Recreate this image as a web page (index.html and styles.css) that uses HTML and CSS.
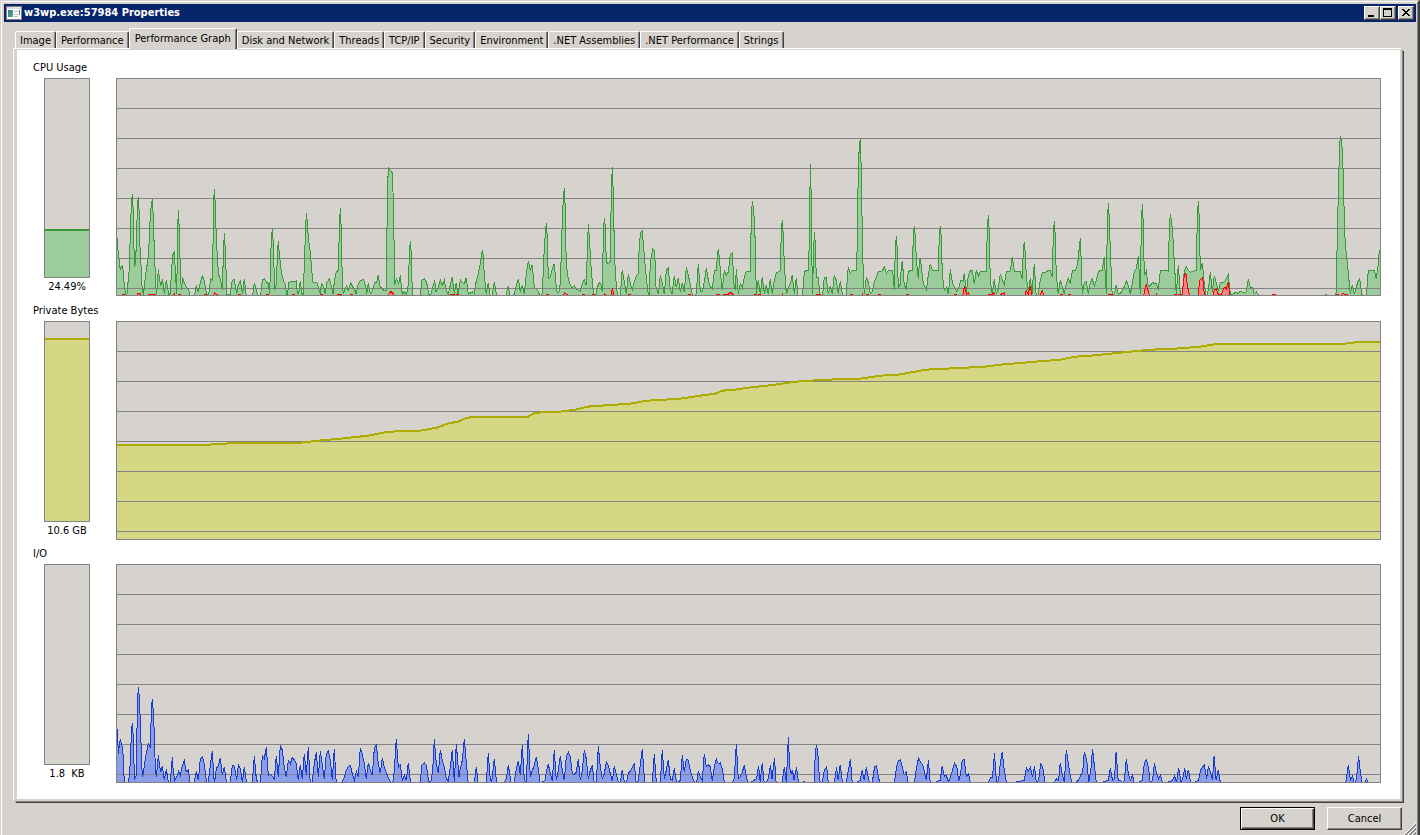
FILE: index.html
```html
<!DOCTYPE html>
<html lang="en">
<head>
<meta charset="utf-8">
<title>w3wp.exe:57984 Properties</title>
<link rel="stylesheet" href="styles.css">
</head>
<body>
<main class="window">
  <header class="titlebar">
    <svg class="app-icon" width="16" height="14" viewBox="0 0 16 14" shape-rendering="crispEdges" aria-hidden="true">
      <defs><linearGradient id="screen" x1="0" y1="0" x2="1" y2="1"><stop offset="0" stop-color="#3a72a8"/><stop offset="1" stop-color="#4fb37a"/></linearGradient></defs>
      <rect width="16" height="14" fill="#848284"/>
      <rect x="1" y="2" width="14" height="11" fill="#fff"/>
      <rect x="1" y="1" width="14" height="2" fill="#d6dbe0"/>
      <rect x="9" y="1" width="1" height="1" fill="#fff"/><rect x="11" y="1" width="1" height="1" fill="#fff"/><rect x="13" y="1" width="1" height="1" fill="#fff"/>
      <rect x="2" y="4" width="5" height="7" fill="url(#screen)"/>
      <path d="M8 5.5h4M8 8.5h4M8 10.5h4" stroke="#bdbebd"/>
      <rect x="13" y="4" width="1" height="5" fill="#4a7a78"/>
    </svg>
    <h1 class="title">w3wp.exe:57984 Properties</h1>
    <div class="controls">
      <button class="control" aria-label="Minimize"><svg width="12" height="10" viewBox="0 0 12 10" shape-rendering="crispEdges"><path d="M2 7h6v2H2z"/></svg></button>
      <button class="control" aria-label="Maximize"><svg width="12" height="10" viewBox="0 0 12 10" shape-rendering="crispEdges"><path fill-rule="evenodd" d="M1 0h9v9H1zM2 2v6h7V2z"/></svg></button>
      <button class="control close" aria-label="Close"><svg width="12" height="10" viewBox="0 0 12 10" shape-rendering="crispEdges"><path d="M2 1h2v1h1v1h2V2h1V1h2v1H9v1H8v1H7v1h1v1h1v1h1v1H8V7H7V6H5v1H4v1H2V7h1V6h1V5h1V4H4V3H3V2H2z"/></svg></button>
    </div>
  </header>

  <div class="tabs" role="tablist">
    <button class="tab" role="tab">Image</button>
    <button class="tab" role="tab">Performance</button>
    <button class="tab selected" role="tab" aria-selected="true">Performance Graph</button>
    <button class="tab" role="tab">Disk and Network</button>
    <button class="tab" role="tab">Threads</button>
    <button class="tab" role="tab">TCP/IP</button>
    <button class="tab" role="tab">Security</button>
    <button class="tab" role="tab">Environment</button>
    <button class="tab" role="tab">.NET Assemblies</button>
    <button class="tab" role="tab">.NET Performance</button>
    <button class="tab" role="tab">Strings</button>
  </div>

  <div class="page" role="tabpanel">
    <section class="metric cpu">
      <h2 class="label">CPU Usage</h2>
      <div class="meter"><div class="gauge"><div class="level" style="height:24.49%"></div></div><span class="value">24.49%</span></div>
      <svg class="plot" id="cpu" viewBox="0 0 1263 216" preserveAspectRatio="none"></svg>
    </section>
    <section class="metric memory">
      <h2 class="label">Private Bytes</h2>
      <div class="meter"><div class="gauge"><div class="level" style="height:92%"></div></div><span class="value">10.6 GB</span></div>
      <svg class="plot" id="memory" viewBox="0 0 1263 217" preserveAspectRatio="none"></svg>
    </section>
    <section class="metric io">
      <h2 class="label">I/O</h2>
      <div class="meter"><div class="gauge"></div><span class="value">1.8&nbsp; KB</span></div>
      <svg class="plot" id="io" viewBox="0 0 1263 217" preserveAspectRatio="none"></svg>
    </section>
  </div>

  <footer class="actions">
    <button class="push default">OK</button>
    <button class="push">Cancel</button>
  </footer>
  <svg class="grip" width="12" height="12" viewBox="0 0 12 12" aria-hidden="true"><path d="M0 12L12 0M4 12L12 4M8 12L12 8" stroke="#fff"/><path d="M1 12L12 1M2 12L12 2M5 12L12 5M6 12L12 6M9 12L12 9M10 12L12 10" stroke="#848284"/></svg>
</main>
<script src="charts.js"></script>
</body>
</html>
```
FILE: styles.css
```css
* { box-sizing: border-box; }
body {
  margin: 0;
  background: #d6d3ce;
  color: #000;
  font: 11px/14px "DejaVu Sans Condensed", "DejaVu Sans", sans-serif;
}
button { font: inherit; color: inherit; margin: 0; padding: 0; background: #d6d3ce; }
h1, h2 { margin: 0; font-size: 11px; font-weight: normal; }

.window {
  position: relative;
  display: flex;
  flex-direction: column;
  min-height: 100vh;
  padding: 3px 2px 0 3px;
  border: solid;
  border-width: 1px 2px 0 1px;
  border-color: #d6d3ce #424142 #d6d3ce #d6d3ce;
  box-shadow: inset 1px 1px #fff, inset -1px 0 #848284;
}
.titlebar {
  display: flex;
  align-items: center;
  height: 18px;
  padding: 0 2px;
  background: #08246b;
  color: #fff;
}
.app-icon { margin-right: 2px; }
.title { flex: 1; font-weight: bold; }
.controls { display: flex; }
.control {
  width: 16px;
  height: 14px;
  border: 1px solid;
  border-color: #fff #424142 #424142 #fff;
  box-shadow: inset -1px -1px #848284;
}
.control svg { display: block; margin: 1px; }
.close { margin-left: 2px; }

.tabs { display: flex; align-items: flex-end; height: 27px; padding: 0 0 1px 11px; }
.tab {
  height: 17px;
  padding: 1px 4px 0;
  border: 1px solid;
  border-width: 1px 1px 0 1px;
  border-color: #fff #424142 #fff #fff;
  border-radius: 2px 2px 0 0;
  box-shadow: inset -1px 0 #848284;
  white-space: nowrap;
}
.selected { position: relative; height: 21px; margin-bottom: -1px; padding: 0 5px 1px; }

.page {
  display: flex;
  flex: 1;
  flex-direction: column;
  margin: 0 14px 0 10px;
  padding: 4px 19px 16px 16px;
  background: #fff;
  border: 3px solid #d6d3ce;
  border-width: 1px 2px 2px 3px;
  box-shadow: 1px 1px #848284, 2px 2px #424142, -1px -1px #fff;
}
.metric {
  display: grid;
  flex: 1;
  grid-template: 24px 1fr / 68px 1fr;
  column-gap: 15px;
}
.cpu { padding-bottom: 1px; }
.label { grid-column: 1 / -1; padding-top: 7px; }
.meter { display: flex; flex-direction: column; align-items: center; }
.gauge {
  display: flex;
  flex: 1;
  flex-direction: column;
  justify-content: flex-end;
  width: 46px;
  background: #d6d3ce;
  border: 1px solid #848284;
}
.level { border-top: 2px solid; }
.value { height: 18px; line-height: 18px; }
.plot {
  width: 100%;
  height: 100%;
  min-height: 0;
  background: #d6d3ce;
  border: 1px solid #848284;
}
.cpu .level { background: #9ccb9c; border-color: #399a39; }
.memory .level { background: #d6d784; border-color: #adaa00; }

.line, .grid { fill: none; vector-effect: non-scaling-stroke; shape-rendering: crispEdges; }
.grid { stroke: #848284; }
.area { shape-rendering: crispEdges; }
.cpu .area { fill: #9ccb9c; }
.cpu .line { stroke: #399a39; }
.cpu .kernel-area { fill: #ff8684; }
.cpu .kernel-line { stroke: #f00; }
.memory .area { fill: #d6d784; }
.memory .line { stroke: #adaa00; stroke-width: 2px; }
.io .area { fill: #8c9ee7; }
.io .line { stroke: #183cce; }

.actions { display: flex; justify-content: flex-end; gap: 12px; padding: 6px 14px 5px 0; }
.push {
  width: 75px;
  height: 23px;
  border: 1px solid;
  border-color: #fff #424142 #424142 #fff;
  box-shadow: inset -1px -1px #848284;
}
.default {
  border-color: #000;
  box-shadow: inset 1px 1px #fff, inset -1px -1px #424142, inset -2px -2px #848284;
}
.grip { position: absolute; right: 2px; bottom: 0; }
```
FILE: charts.js
```javascript
// Each series is a list of blocks: x origin, x scale, then "x,y" samples.
// Samples are stored in thirds of a chart unit.
const CPU = [
  [-21, 1, `22,352 24,388 27,415 31,450 34,438 38,436 42,485 46,515 49,522 52,515 55,475 58,445 61,340 64,258 67,220 70,277 72,385 74,440 77,418 80,340 82,265 85,230 88,280 90,380 94,450 97,515 101,522 103,495 109,450 115,410 118,355 121,285 124,253 127,236 130,290 133,390 136,460 139,520 142,500 145,445 148,470 152,497 157,480 160,490 163,522 166,500 169,480 172,495 176,522 181,520 184,460 188,405 193,392 196,450 200,522 203,330 205,268 208,328 211,450 214,508 218,475 224,490 230,502 236,505 241,528 253,528 259,495 265,515 271,487 277,467 283,480 286,500 290,522 296,522 302,475 308,480 310,275 313,205 316,255 319,350 323,430 326,463 332,480 337,508 340,410 343,337 346,390 349,475 350,522 361,522 367,480 373,478 380,522 385,490 391,482 398,522 403,475 407,515 410,528 427,528 433,487 440,515 445,528 452,522 457,480 463,475 470,485 475,490 479,522 482,400 487,322 490,370 494,510 499,490 502,410 505,361 508,400 514,455 520,480 525,490 532,528 536,487 544,482 553,485 559,482 562,520 566,520 571,482 575,520 580,522 583,430 586,350 589,277 592,305 595,350 600,390 604,430 608,485 613,487 620,485 625,500 631,522 634,490 641,499 646,522 650,487 658,475 664,497 669,520 673,485 679,455 685,450 688,330 691,262 694,330 697,485 700,522 705,505 710,497 715,510 722,487 728,500 734,508 739,522 743,495 751,480 761,478 767,497 770,520 775,487 781,520 787,510 794,487 800,485 805,463 809,495 815,505 822,510 828,512 830,410 832,235 835,142 840,148 847,158 850,240 853,410 854,495 859,475 866,490 871,465 875,510 878,522 883,515 890,522 895,490 898,410 901,361 904,400 907,520 909,528 931,528 935,480 943,475 950,487 956,522 963,522 968,500 974,480 978,515 983,505 989,487`],
  [939, 1, `31,479 37,495 43,479 49,510 55,522 61,495 67,470 73,520 79,487 84,522 91,479 98,487 103,490 109,472 115,522 127,515 132,522 137,490 145,460 151,430 157,388 160,405 163,465 169,522 175,487 181,528 187,522 193,485 199,520 208,528 226,528 235,497 242,528 253,522 259,495 265,475 271,515 277,493 283,522 289,460 295,421 301,450 307,433 313,500 319,508 325,512 331,528 337,520 343,380 349,307 352,350 355,475 361,470 367,445 373,430 379,500 382,517 388,515 391,485 394,400 397,300 400,235 403,202 406,268 408,395 412,463 418,485 425,503 433,497 439,507 451,512 457,490 463,479 469,495 472,390 475,310 478,350 484,450 490,515 496,528 502,500 508,487 514,495 517,515 520,350 523,292 526,320 529,425 535,430 541,422 544,215 547,141 550,220 553,375 556,460 562,520 571,528 575,465 577,448 584,490 589,522 595,460 601,490 607,510 613,485 619,467 625,460 628,370 632,335 637,331 640,370 645,430 652,500 657,528 661,430 668,385 674,392 678,500 685,522 691,465 697,487 703,522 709,450 715,442 720,500 726,522 733,467 739,500 745,472 751,515 757,488 763,515 769,440 775,465 782,497 789,528 799,520 805,430 811,512 817,512 823,485 829,442 835,480 840,497 847,507 853,452 859,450 862,412 865,385 868,410 874,485 877,510 883,450 889,465 895,455 901,402 907,398 912,490 916,510 919,446 925,520 931,490 937,503 943,470 949,453 961,453 964,295 967,241 970,265 973,295 976,370 979,522`],
  [1899, 1, `25,479 31,520 37,470 43,520 49,493 55,520 61,476 67,522 73,480 79,457 91,452 94,333 97,298 100,345 103,435 109,520 117,497 121,490 127,464 133,520 139,473 145,528 157,528 163,455 169,450 175,450 178,370 181,130 184,235 187,522 190,430 193,334 196,370 199,470 205,472 211,528 218,522 223,470 229,472 235,522 241,497 247,520 253,463 259,480 265,520 271,482 277,522 289,528 292,470 295,440 301,458 307,450 319,450 322,375 325,133 328,82 331,56 334,153 337,345 340,463 343,522 349,473 355,485 361,520 367,515 373,485 379,470 385,453 397,452 403,440 409,458 415,450 427,450 430,470 433,510 436,385 439,347 442,390 445,505 451,490 454,440 457,421 463,495 469,505 475,453 487,450 490,350 493,317 496,345 499,415 505,475 508,430 511,412 514,440 520,490 529,508 535,465 541,430 547,450 559,452 565,450 568,345 571,317 574,350 577,460 583,510 590,500 595,522 598,490 601,446 607,485 613,500 620,513 626,503 632,480 640,482 643,457 649,520 655,465 661,452 667,450 673,490 679,450 685,468 691,452 709,452 712,325 715,283 718,335 721,485 727,522 733,476 739,522 745,505 751,460 757,480 763,493 769,455 781,452 787,409 793,453 811,453 817,475 820,390 823,364 826,400 829,470 835,515 841,473 847,520 850,460 853,431 859,528 865,522 871,480 877,458 889,455 895,450 901,450 907,470 910,345 913,301 916,350 919,465 925,522 931,479 937,500 943,520 949,490 955,473 961,490 967,452 977,450 983,430 989,370`],
  [2859, 1, `31,352 34,430 37,522 43,487 49,483 55,522 61,485 67,476 73,497 79,480 85,453 97,450 103,409 109,522 112,315 115,247 118,295 121,390 127,528 133,520 139,494 145,522 151,520 157,510 163,500 169,482 175,495 181,522 187,490 193,452 199,445 205,406 211,522 214,320 217,250 220,310 223,465 229,452 235,500 241,495 247,487 259,490 265,510 271,452 283,450 295,452 298,325 301,280 304,300 307,325 310,370 313,425 319,522 322,480 325,433 331,522 337,522 343,450 349,439 355,450 361,456 373,452 379,450 382,295 385,241 388,295 391,450 397,428 403,490 409,528 415,510 421,455 427,515 433,467 439,487 445,512 451,488 463,485 469,475 475,463 481,522 487,522 499,515 505,520 511,512 523,518 529,515 535,476 541,500 547,500 553,520 559,515 565,523 575,528 763,528 768,521 773,528 793,528 799,515 802,340 805,225 808,105 811,46 814,60 817,88 820,165 823,295 826,375 832,425 838,490 841,520 847,494 853,522 859,500 863,485 869,476 875,522 889,528 892,485 895,452 907,450 913,450 919,475 925,430 928,390 930,390`]
];
const KERNEL = [
  [-21, 1, `22,528 36,528 36,523 42,523 42,528 82,528 83,519 92,519 95,528 115,528 115,522 137,522 137,528 190,528 193,517 197,528 205,528 205,523 210,523 210,528 283,528 283,523 288,523 288,528 310,528 313,517 322,523 323,528 385,528 385,523 390,523 390,528 468,528 468,523 474,523 474,528 546,528 546,523 552,523 552,528 630,528 630,523 636,523 636,528 682,528 683,521 695,521 695,528 720,528 720,523 726,523 726,528 835,528 837,520 843,514 849,519 852,528`],
  [939, 1, `60,528 60,523 72,523 72,528 78,528 78,523 84,523 84,528 348,528 348,523 354,523 354,528 400,528 403,517 412,523 412,528 456,528 456,523 462,523 462,528 486,528 486,523 492,523 492,528 520,528 523,520 527,523 527,528 541,528 547,506 555,528 594,528 594,523 600,523 600,528 774,528 774,523 780,523 780,528 858,528 858,523 868,523 868,528 880,528 880,521 896,521 901,515 910,523 910,528 972,528 972,523 978,523 978,528`],
  [1899, 1, `24,528 24,523 30,523 30,528 94,528 97,520 101,528 198,528 198,523 210,523 210,528 300,528 300,523 306,523 306,528 334,528 337,520 341,528 348,528 348,523 354,523 354,528 384,528 384,523 390,523 390,528 468,528 468,523 474,523 474,528 612,528 612,523 618,523 618,528 637,528 643,497 650,522 656,517 660,528 714,528 714,523 720,523 720,528 726,522 732,517 738,528 750,528 750,523 763,517 768,528 823,528 829,510 835,522 841,496 847,528 868,528 871,522 877,512 884,528 930,528 930,523 936,523 936,528 954,528 954,523 960,523 960,528`],
  [2859, 1, `114,528 114,523 126,523 126,528 220,528 223,515 229,491 237,522 238,528 255,528 259,521 263,528 312,528 312,523 318,523 318,528 324,528 324,523 330,523 330,528 337,520 343,465 348,460 352,495 358,522 361,528 385,525 388,487 391,477 397,473 400,487 403,522 403,528 427,528 433,508 439,505 445,522 454,522 457,515 463,500 469,505 475,485 481,528 606,528 606,523 617,523 617,528 798,528 798,523 804,523 804,528 814,528 816,520 833,523 833,528 930,528`]
];
const IO = [
  [-21, 1, `22,175 25,250 28,225 31,206 34,218 37,230 40,260 43,340 55,334 58,320 61,275 64,196 67,157 70,200 73,310 74,325 79,315 82,115 85,50 88,80 91,150 94,245 97,320 100,310 103,285 109,250 115,220 121,232 124,125 127,85 130,125 133,190 136,290 139,320 142,290 145,254 148,280 152,305 157,287 163,330 169,296 176,340 181,335 187,260 190,305 194,330 200,320 206,302 211,315 217,285 223,272 229,305 235,300 241,340 253,335 259,303 265,330 271,265 277,260 283,280 290,340 295,335 301,285 307,242 313,340 319,295 325,285 331,263 337,315 343,290 350,340 361,335 367,285 373,288 380,330 385,284 391,295 397,335 403,290 410,340 427,335 433,257 439,325 445,340 451,335 454,300 457,257 463,265 469,230 475,315 481,313 487,318 493,325 499,257 505,320 511,224 517,240 523,290 529,320 535,272 541,280 547,262 553,268 559,280 565,330 571,285 577,325 583,250 589,315 595,230 601,340 607,335 613,280 619,245 625,320 631,242 637,285 643,325 649,250 655,242 661,270 667,330 673,236 679,340 697,335 703,320 709,300 715,288 721,285 727,310 733,330 739,303 745,320 751,233 757,252 763,280 769,325 775,278 781,300 787,315 793,235 799,221 805,280 811,308 817,263 823,290 832,315 841,335 848,340 853,300 859,206 862,250 865,290 871,283 877,330 883,315 889,330 895,278 902,340 931,340 935,285 943,278 949,285 956,335 963,333 968,300 973,206`],
  [939, 1, `13,205 19,280 25,308 31,238 37,270 43,290 49,325 55,333 61,290 67,238 73,335 79,220 87,320 91,295 97,270 103,205 109,275 115,340 133,335 139,290 145,340 169,335 175,248 181,330 185,335 193,265 200,340 223,335 229,325 235,284 243,335 253,335 259,295 265,272 271,315 277,224 283,330 289,335 295,190 301,320 307,300 313,285 319,260 325,295 331,340 337,335 345,330 349,305 355,281 361,310 367,333 373,238 379,330 385,300 391,257 397,300 403,330 409,258 415,245 421,260 427,310 433,312 439,305 445,266 451,330 457,300 463,238 469,265 475,325 481,300 487,285 493,340 499,340 505,227 511,290 517,325 523,310 529,275 535,285 541,310 547,333 553,288 559,310 565,335 571,335 577,298 583,335 590,335 595,308 601,303 607,290 613,281 619,340 625,330 631,285 637,235 643,320 644,340 667,335 673,250 679,335 691,335 697,238 703,325 709,300 715,268 721,325 727,330 733,293 740,340 751,330 757,254 763,305 769,266 775,270 781,300 787,320 793,335 800,335 805,302 811,320 817,330 823,250 829,290 835,284 841,290 847,333 853,290 859,266 865,280 871,278 877,295 884,340 907,335 913,325 919,220 925,325 931,320 937,305 943,284 949,320 956,340`],
  [1899, 1.2245, `16,325 21,287 25,335 30,278 35,340 40,334 45,325 50,284 54,325 60,263 64,335 65,340 79,335 84,290 89,335 94,200 97,290 101,310 104,298 108,330 114,290 119,340 133,334 137,340 157,335 160,250 163,223 167,260 170,325 174,340 178,330 182,300 188,290 192,340 207,335 212,290 216,330 221,284 227,340 236,335 241,300 246,266 250,330 254,340 270,330 275,298 280,330 285,290 291,330 294,340 300,335 305,290 310,286 315,325 321,340 354,335 360,285 364,270 369,268 373,290 378,313 383,305 388,340 403,335 408,290 413,263 418,275 424,287 428,310 432,330 437,270 442,340 466,330 471,287 476,318 481,315 486,335 491,320 496,300 501,278 507,290 511,333 516,310 520,270 525,268 530,318 535,310 541,340 584,335 590,322 594,320 599,248 604,340 609,330 613,280 618,244 623,300 629,340 672,330 677,293 682,302 687,290 692,320 697,287 702,340 707,330 712,280 717,290 723,340 746,335 751,325 756,330 760,278 765,310 770,335 775,238 780,280 785,320 790,340 805,330 810,315 815,305 819,244 825,270 830,335 835,300 839,235 844,290 849,340 878,330 883,293 888,330 893,325 897,244 902,330 908,330 912,340 917,330 922,266 927,310 932,330 937,315 942,340 961,330 966,280 971,268 976,290 981,340 986,330 991,278 996,310 1001,325 1006,315 1011,340 1035,330 1040,317 1045,335 1050,293 1056,335 1060,325 1065,293 1069,325 1074,298 1080,340 1099,330 1104,300 1109,290 1113,284 1119,325 1123,287 1128,305 1133,330 1137,257 1142,330 1147,298 1153,340 1459,340 1466,284 1471,330 1476,317 1481,340 1486,325 1491,257 1495,300 1500,340 1507,335 1511,325 1514,340`]
];
const MEMORY = [[0, 3, `0,369 93,369 100,366 153,363 183,363 201,357 223,351 251,342 271,330 303,327 320,318 330,306 341,300 350,288 363,285 411,285 418,273 443,270 458,264 470,255 483,252 513,246 530,237 563,231 583,222 598,216 605,207 618,204 631,198 658,189 678,180 708,174 743,171 763,162 781,159 798,150 808,144 848,138 868,135 883,129 918,120 943,114 958,105 973,102 993,96 1013,90 1033,84 1058,81 1083,75 1101,66 1228,66 1243,60 1264,60`]];

// top: the sample y value that lies on the chart's upper edge
// floor: samples from here down are idle and stay below the visible area
function points(series, top, floor) {
  return series.flatMap(([origin, scale, text]) => text.split(" ").map(pair => {
    const [x, y] = pair.split(",").map(Number);
    const chartY = y >= floor ? 219 : (y - top + 1) / 3;
    return [((x * scale + origin) / 3).toFixed(1), chartY.toFixed(1)];
  }));
}
function add(svg, d, name) {
  const path = document.createElementNS("http://www.w3.org/2000/svg", "path");
  path.setAttribute("d", d);
  path.setAttribute("class", name);
  svg.append(path);
}
function toLine(list) { return "M" + list.map(p => p.join(" ")).join("L"); }
function toArea(list) {
  return toLine(list) + `L${list[list.length - 1][0]} 220L${list[0][0]} 220Z`;
}
function draw(id, series, top, floor, overlay) {
  const svg = document.getElementById(id);
  const list = points(series, top, floor);
  add(svg, toArea(list), "area");
  let over = null;
  if (overlay) {
    over = points(overlay, top, floor);
    add(svg, toArea(over), "kernel-area");
  }
  let grid = "";
  for (let y = 29.5; y < 216; y += 30) grid += `M0 ${y}H1263`;
  add(svg, grid, "grid");
  add(svg, toLine(list), "line");
  if (over) add(svg, toLine(over), "line kernel-line");
}
draw("cpu", CPU, -123, 525, KERNEL);
draw("memory", MEMORY, 2, 999);
draw("io", IO, -315, 338);
```
